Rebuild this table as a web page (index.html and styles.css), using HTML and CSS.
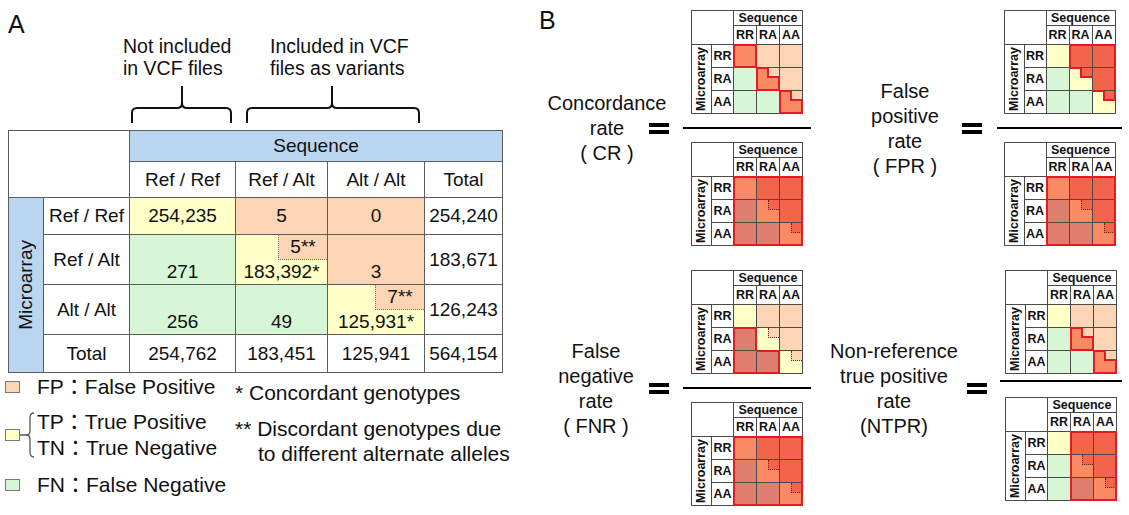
FILE: index.html
```html
<!DOCTYPE html>
<html>
<head>
<meta charset="utf-8">
<title>Genotype concordance</title>
<link rel="stylesheet" href="styles.css">
</head>
<body>
<div class="fig">
  <section class="panel-a">
    <div class="panel-letter">A</div>
    <div class="notes">
      <div class="note note-1">Not included<br>in VCF files</div>
      <div class="note">Included in VCF<br>files as variants</div>
    </div>
    <svg class="braces" width="530" height="51" viewBox="0 0 530 51">
      <path d="M132,44 V34 Q132,29 137,29 H177 Q182,29 182,24 V7 M182,24 Q182,29 187,29 H226 Q231,29 231,34 V44"/>
      <path d="M247,44 V34 Q247,29 252,29 H327 Q332,29 332,24 V7 M332,24 Q332,29 337,29 H414 Q419,29 419,34 V44"/>
    </svg>
    <div class="ct">
      <div class="ct-corner"></div>
      <div class="ct-seq">Sequence</div>
      <div>Ref / Ref</div><div>Ref / Alt</div><div>Alt / Alt</div><div>Total</div>
      <div class="ct-mic"><span>Microarray</span></div>
      <div>Ref / Ref</div><div class="y">254,235</div><div class="o">5</div><div class="o">0</div><div>254,240</div>
      <div>Ref / Alt</div><div class="g bot">271</div><div class="y bot has-sub"><span class="sub">5**</span>183,392*</div><div class="o bot">3</div><div>183,671</div>
      <div>Alt / Alt</div><div class="g bot">256</div><div class="g bot">49</div><div class="y bot has-sub"><span class="sub">7**</span>125,931*</div><div>126,243</div>
      <div>Total</div><div>254,762</div><div>183,451</div><div>125,941</div><div>564,154</div>
    </div>
    <div class="legend">
      <div class="lg-col">
        <div class="lg-item"><span class="sw o"></span>FP：False Positive</div>
        <div class="lg-item lg-tp">
          <span class="sw sw-tight y"></span>
          <svg class="lg-brace" width="17" height="52" viewBox="0 0 17 52"><path d="M0,26 H6 M14,4 Q10,4 10,9 V22 Q10,26 6,26 Q10,26 10,30 V43 Q10,48 14,48"/></svg>
          <div>TP：True Positive<br>TN：True Negative</div>
        </div>
        <div class="lg-item lg-fn"><span class="sw g"></span>FN：False Negative</div>
      </div>
      <div class="lg-notes">
        <p class="lg-n1">* Concordant genotypes</p>
        <p class="lg-n2">** Discordant genotypes due<br>to different alternate alleles</p>
      </div>
    </div>
  </section>

  <section class="panel-b">
    <div class="panel-letter">B</div>

    <div class="fx fx-1">
      <div class="fl">Concordance<br>rate<br>( CR )</div>
      <span class="eq"></span>
      <div class="frac">
        <div class="mx">
          <div class="mx-corner"></div><div class="mx-seq">Sequence</div>
          <div>RR</div><div>RA</div><div>AA</div>
          <div class="mx-mic"><span>Microarray</span></div>
          <div>RR</div><div class="ry t r b l"></div><div class="o"></div><div class="o"></div>
          <div>RA</div><div class="g"></div><div class="ry t r b l"><i class="n sl o"></i></div><div class="o"></div>
          <div>AA</div><div class="g"></div><div class="g"></div><div class="ry t r b l"><i class="n sl o"></i></div>
        </div>
        <div class="bar"></div>
        <div class="mx">
          <div class="mx-corner"></div><div class="mx-seq">Sequence</div>
          <div>RR</div><div>RA</div><div>AA</div>
          <div class="mx-mic"><span>Microarray</span></div>
          <div>RR</div><div class="ry t l"></div><div class="ro t"></div><div class="ro t r"></div>
          <div>RA</div><div class="rg l"></div><div class="ry"><i class="n dl ro"></i></div><div class="ro r"></div>
          <div>AA</div><div class="rg l b"></div><div class="rg b"></div><div class="ry b r"><i class="n dl ro"></i></div>
        </div>
      </div>
    </div>

    <div class="fx fx-2">
      <div class="fl">False<br>positive<br>rate<br>( FPR )</div>
      <span class="eq"></span>
      <div class="frac">
        <div class="mx">
          <div class="mx-corner"></div><div class="mx-seq">Sequence</div>
          <div>RR</div><div>RA</div><div>AA</div>
          <div class="mx-mic"><span>Microarray</span></div>
          <div>RR</div><div class="y"></div><div class="ro t l"></div><div class="ro t r"></div>
          <div>RA</div><div class="g"></div><div class="y t"><i class="n sl ro"></i></div><div class="ro r"></div>
          <div>AA</div><div class="g"></div><div class="g"></div><div class="y t"><i class="n sl slr ro"></i></div>
        </div>
        <div class="bar"></div>
        <div class="mx">
          <div class="mx-corner"></div><div class="mx-seq">Sequence</div>
          <div>RR</div><div>RA</div><div>AA</div>
          <div class="mx-mic"><span>Microarray</span></div>
          <div>RR</div><div class="ry t l"></div><div class="ro t"></div><div class="ro t r"></div>
          <div>RA</div><div class="rg l"></div><div class="ry"><i class="n dl ro"></i></div><div class="ro r"></div>
          <div>AA</div><div class="rg l b"></div><div class="rg b"></div><div class="ry b r"><i class="n dl ro"></i></div>
        </div>
      </div>
    </div>

    <div class="fx fx-3">
      <div class="fl">False<br>negative<br>rate<br>( FNR )</div>
      <span class="eq"></span>
      <div class="frac">
        <div class="mx">
          <div class="mx-corner"></div><div class="mx-seq">Sequence</div>
          <div>RR</div><div>RA</div><div>AA</div>
          <div class="mx-mic"><span>Microarray</span></div>
          <div>RR</div><div class="y"></div><div class="o"></div><div class="o"></div>
          <div>RA</div><div class="rg t l r"></div><div class="y"><i class="n dl o"></i></div><div class="o"></div>
          <div>AA</div><div class="rg l b"></div><div class="rg t r b"></div><div class="y"><i class="n dl o"></i></div>
        </div>
        <div class="bar"></div>
        <div class="mx">
          <div class="mx-corner"></div><div class="mx-seq">Sequence</div>
          <div>RR</div><div>RA</div><div>AA</div>
          <div class="mx-mic"><span>Microarray</span></div>
          <div>RR</div><div class="ry t l"></div><div class="ro t"></div><div class="ro t r"></div>
          <div>RA</div><div class="rg l"></div><div class="ry"><i class="n dl ro"></i></div><div class="ro r"></div>
          <div>AA</div><div class="rg l b"></div><div class="rg b"></div><div class="ry b r"><i class="n dl ro"></i></div>
        </div>
      </div>
    </div>

    <div class="fx fx-4">
      <div class="fl">Non-reference<br>true positive<br>rate<br>(NTPR)</div>
      <span class="eq"></span>
      <div class="frac">
        <div class="mx">
          <div class="mx-corner"></div><div class="mx-seq">Sequence</div>
          <div>RR</div><div>RA</div><div>AA</div>
          <div class="mx-mic"><span>Microarray</span></div>
          <div>RR</div><div class="y"></div><div class="o"></div><div class="o"></div>
          <div>RA</div><div class="g"></div><div class="ry t r b l"><i class="n sl o"></i></div><div class="o"></div>
          <div>AA</div><div class="g"></div><div class="g"></div><div class="ry t r b l"><i class="n sl o"></i></div>
        </div>
        <div class="bar"></div>
        <div class="mx">
          <div class="mx-corner"></div><div class="mx-seq">Sequence</div>
          <div>RR</div><div>RA</div><div>AA</div>
          <div class="mx-mic"><span>Microarray</span></div>
          <div>RR</div><div class="y"></div><div class="ro t l"></div><div class="ro t r"></div>
          <div>RA</div><div class="g"></div><div class="ry l"><i class="n dl ro"></i></div><div class="ro r"></div>
          <div>AA</div><div class="g"></div><div class="rg l b"></div><div class="ry b r"><i class="n dl ro"></i></div>
        </div>
      </div>
    </div>
  </section>
</div>
</body>
</html>
```

FILE: styles.css
```css
* { box-sizing: border-box; margin: 0; padding: 0; }

body {
  width: 1129px;
  height: 515px;
  overflow: hidden;
  background: #fff;
  color: #111;
  font-family: "Liberation Sans", "Noto Sans CJK JP", Arial, sans-serif;
}

.fig { display: flex; }

/* ---------- shared colours ---------- */
:where(.ct > div), :where(.mx > div) { background: #fff; }
.y  { background: #ffffc8; }
.o  { background: #fcd5b4; }
.g  { background: #d6f6d6; }
.ry { background: #f98a63; }
.ro { background: #f2644b; }
.rg { background: #de7e6e; }

.panel-letter {
  font-size: 25px;
  line-height: 22px;
}

/* ---------- panel A ---------- */
.panel-a {
  flex: none;
  width: 530px;
  padding-top: 13px;
}
.panel-a .panel-letter { margin-left: 8px; }

.notes {
  display: flex;
  font-size: 19.5px;
  line-height: 22px;
}
.note-1 {
  margin-left: 123px;
  width: 147px;
}

.braces {
  display: block;
  fill: none;
  stroke: #111;
  stroke-width: 2;
}

.ct {
  display: grid;
  margin-left: 8px;
  width: 495px;
  grid-template-columns: 34px 85px 105px 91px 96px 77px;
  grid-template-rows: 30px 35px 36px 49px 49px 37px;
  gap: 1px;
  padding: 1px;
  background: #5c5c5c;
  font-size: 19px;
  line-height: 22px;
}
.ct > div {
  display: flex;
  align-items: center;
  justify-content: center;
}
.ct .ct-corner { grid-area: 1 / 1 / 3 / 3; }
.ct .ct-seq { grid-area: 1 / 3 / 2 / 7; background: #b9d5f0; }
.ct .ct-mic { grid-area: 3 / 1 / 7 / 2; background: #b9d5f0; }
.ct-mic span {
  writing-mode: vertical-rl;
  transform: rotate(180deg);
}
.ct .bot {
  align-items: flex-end;
  padding-bottom: 1px;
}
.ct .has-sub { position: relative; }
.sub {
  position: absolute;
  top: 0;
  right: 0;
  width: 49px;
  height: 25px;
  display: flex;
  align-items: center;
  justify-content: center;
  background: #fcd5b4;
  border-left: 1px dotted #777;
  border-bottom: 1px dotted #777;
}

.legend {
  display: flex;
  margin-top: 1px;
  padding-left: 5px;
  font-size: 21px;
  line-height: 26px;
}
.lg-col { width: 230px; flex: none; }
.lg-item {
  display: flex;
  align-items: center;
  white-space: nowrap;
}
.sw {
  flex: none;
  width: 15px;
  height: 12px;
  border: 1px solid #7a7a7a;
  margin-right: 17px;
}
.sw-tight { margin-right: 0; }
.lg-brace {
  flex: none;
  fill: none;
  stroke: #555;
  stroke-width: 1.3;
}
.lg-tp { margin-top: 9px; }
.lg-fn { margin-top: 11px; }

.lg-notes p { white-space: nowrap; }
.lg-n1 { margin-top: 6px; }
.lg-n2 {
  margin-top: 10px;
  line-height: 25px;
  padding-left: 23px;
  text-indent: -23px;
}

/* ---------- panel B ---------- */
.panel-b {
  flex: 1;
  display: grid;
  grid-template-columns: 285px 1fr;
  grid-template-rows: 237px 237px;
  row-gap: 23px;
  padding-top: 10px;
}
.panel-b .panel-letter {
  grid-area: 1 / 1;
  align-self: start;
  justify-self: start;
  margin: -1px 0 0 9px;
}

.fx {
  display: flex;
  align-items: center;
}
.fx-1 { grid-area: 1 / 1; }
.fx-2 { grid-area: 1 / 2; }
.fx-3 { grid-area: 2 / 1; }
.fx-4 { grid-area: 2 / 2; }

.fl {
  flex: none;
  font-size: 20px;
  line-height: 25px;
  text-align: center;
  white-space: nowrap;
}
.eq {
  flex: none;
  width: 20px;
  height: 11px;
  border-top: 4px solid #000;
  border-bottom: 4px solid #000;
}
.frac {
  flex: none;
  align-self: flex-start;
  display: flex;
  flex-direction: column;
  align-items: center;
}
.bar {
  align-self: stretch;
  height: 2px;
  background: #000;
  margin: 13px 0;
}

.fx-1 .fl { width: 124px; margin-left: 15px; }
.fx-1 .eq { margin-left: -20px; }
.fx-1 .frac { margin-left: 14px; width: 128px; }

.fx-3 .fl { width: 124px; margin-left: 4px; }
.fx-3 .eq { margin-left: -9px; }
.fx-3 .frac { margin-left: 14px; width: 128px; }

.fx-2 .fl { width: 110px; margin-left: 35px; }
.fx-2 .eq { margin-left: 2px; }
.fx-2 .frac { margin-left: 15px; width: 125px; }

.fx-4 .fl { width: 130px; margin-left: 14px; }
.fx-4 .eq { margin-left: 8px; }
.fx-4 .frac { margin-left: 13px; width: 122px; }
.fx-4 .bar { margin: 6px 0 15px; }

/* mini matrices */
.mx {
  display: grid;
  width: 112px;
  grid-template-columns: 19px 21px 22px 22px 22px;
  grid-template-rows: 14px 18px 22px 22px 22px;
  gap: 1px;
  padding: 1px;
  background: #4a4a4a;
  font-size: 12.5px;
  font-weight: bold;
  line-height: 1;
  color: #111;
}
.mx > div {
  position: relative;
  display: flex;
  align-items: center;
  justify-content: center;
}
.mx .mx-corner { grid-area: 1 / 1 / 3 / 3; }
.mx .mx-seq { grid-area: 1 / 3 / 2 / 6; }
.mx .mx-mic { grid-area: 3 / 1 / 6 / 2; }
.mx-mic span {
  writing-mode: vertical-rl;
  transform: rotate(180deg);
}

.mx .t::after, .mx .r::after, .mx .b::after, .mx .l::after {
  content: "";
  position: absolute;
  inset: -1px;
  border: 0 solid #e31b23;
  z-index: 1;
}
.mx .t::after { border-top-width: 2px; }
.mx .r::after { border-right-width: 2px; }
.mx .b::after { border-bottom-width: 2px; }
.mx .l::after { border-left-width: 2px; }

.n {
  position: absolute;
  top: 0;
  right: 0;
  width: 11px;
  height: 10px;
}
.n.sl {
  top: -1px;
  right: -1px;
  width: 13px;
  height: 11px;
  border-left: 2px solid #e31b23;
  border-bottom: 2px solid #e31b23;
  border-top: 1px solid #4a4a4a;
  border-right: 1px solid #4a4a4a;
  z-index: 2;
}
.n.slr { border-right: 2px solid #e31b23; }
.n.dl {
  border-left: 1px dotted #6a2418;
  border-bottom: 1px dotted #6a2418;
}
```
